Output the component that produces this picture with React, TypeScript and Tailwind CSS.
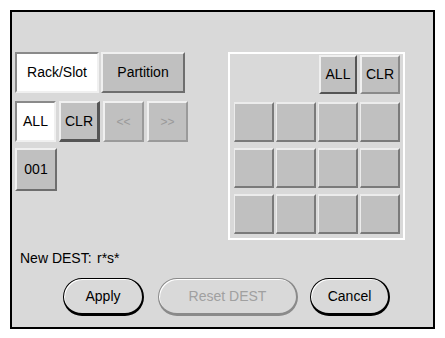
import React from "react";

const font = { fontFamily: '"Liberation Sans", Arial, sans-serif' };

function Raised({ w, h, children, className = "" }: { w: string; h: string; children?: React.ReactNode; className?: string }) {
  return (
    <div
      className={`${w} ${h} flex items-center justify-center border-2 border-t-[#f0f0f0] border-l-[#f0f0f0] border-b-[#6e6e6e] border-r-[#6e6e6e] bg-[#c0c0c0] text-[14px] text-black ${className}`}
    >
      {children}
    </div>
  );
}

function Pressed({ w, h, children }: { w: string; h: string; children?: React.ReactNode }) {
  return (
    <div
      className={`${w} ${h} flex items-center justify-center border-2 border-t-[#8a8a8a] border-l-[#8a8a8a] border-b-[#f0f0f0] border-r-[#f0f0f0] bg-white text-[14px] text-black`}
    >
      {children}
    </div>
  );
}

function Cell() {
  return (
    <div className="w-[40px] h-[40px] border-t-2 border-l border-b-2 border-r-2 border-t-[#ececec] border-l-[#ececec] border-b-[#7a7a7a] border-r-[#7a7a7a] bg-[#c0c0c0]" />
  );
}

export default function App() {
  return (
    <div className="w-[445px] h-[338px] bg-white pt-[10px] pl-[10px]" style={font}>
      <div className="w-[425px] h-[319px] border-2 border-black bg-[#d9d9d9] flex flex-col">
        <div className="flex pt-[40px] pl-[3px]">
          <div className="w-[213px] flex flex-col">
            <div className="flex gap-[2px]">
              <Pressed w="w-[84px]" h="h-[41px]">Rack/Slot</Pressed>
              <Raised w="w-[84px]" h="h-[41px]">Partition</Raised>
            </div>
            <div className="flex gap-[3px] mt-[8px]">
              <Pressed w="w-[41px]" h="h-[41px]">ALL</Pressed>
              <div className="w-[41px] h-[41px] flex items-center justify-center border-t-2 border-l-2 border-b-[3px] border-r-[3px] border-t-[#f0f0f0] border-l-[#f0f0f0] border-b-[#555] border-r-[#555] bg-[#c0c0c0] text-[14px] text-black">
                CLR
              </div>
              <div className="w-[41px] h-[41px] flex items-center justify-center border-2 border-t-[#f0f0f0] border-l-[#f0f0f0] border-b-[#9a9a9a] border-r-[#9a9a9a] bg-[#c0c0c0] text-[12px] text-[#9a9a9a]">
                &lt;&lt;
              </div>
              <div className="w-[41px] h-[41px] flex items-center justify-center border-2 border-t-[#f0f0f0] border-l-[#f0f0f0] border-b-[#9a9a9a] border-r-[#9a9a9a] bg-[#c0c0c0] text-[12px] text-[#9a9a9a]">
                &gt;&gt;
              </div>
            </div>
            <div className="flex mt-[6px]">
              <Raised w="w-[42px]" h="h-[43px]">001</Raised>
            </div>
          </div>
          <div className="w-[177px] h-[188px] border-2 border-white flex flex-col pl-[4px] pr-[3px]">
            <div className="flex justify-end gap-[3px] mt-[1px] pr-[0px]">
              <Raised w="w-[38px]" h="h-[39px]" className="border-b-[#555] border-r-[#555]">ALL</Raised>
              <Raised w="w-[40px]" h="h-[39px]" className="border-b-[#8a8a8a] border-r-[#8a8a8a]">CLR</Raised>
            </div>
            <div className="grid grid-cols-4 gap-x-[2px] gap-y-[6px] mt-[8px]">
              {Array.from({ length: 12 }).map((_, i) => (
                <Cell key={i} />
              ))}
            </div>
          </div>
        </div>
        <div className="flex mt-[10px] pl-[8px] h-[16px] leading-[16px] text-[14px] text-black">
          <span className="w-[77px]">New DEST:</span>
          <span>r*s*</span>
        </div>
        <div className="flex mt-[12px] pl-[51px]">
          <div className="w-[81px] h-[38px] rounded-full border border-black border-b-[3px] border-r-[2px] bg-[#d9d9d9] shadow-[inset_1px_1px_0_#ffffff] flex items-center justify-center text-[14px] text-black">
            Apply
          </div>
          <div className="ml-[14px] w-[140px] h-[38px] rounded-full border border-[#8a8a8a] border-b-[3px] border-r-[2px] bg-[#d9d9d9] shadow-[inset_1px_1px_0_#ffffff] flex items-center justify-center text-[14px] text-[#a0a0a0]">
            Reset DEST
          </div>
          <div className="ml-[12px] w-[80px] h-[38px] rounded-full border border-black border-b-[3px] border-r-[2px] bg-[#d9d9d9] shadow-[inset_1px_1px_0_#ffffff] flex items-center justify-center text-[14px] text-black">
            Cancel
          </div>
        </div>
      </div>
    </div>
  );
}
